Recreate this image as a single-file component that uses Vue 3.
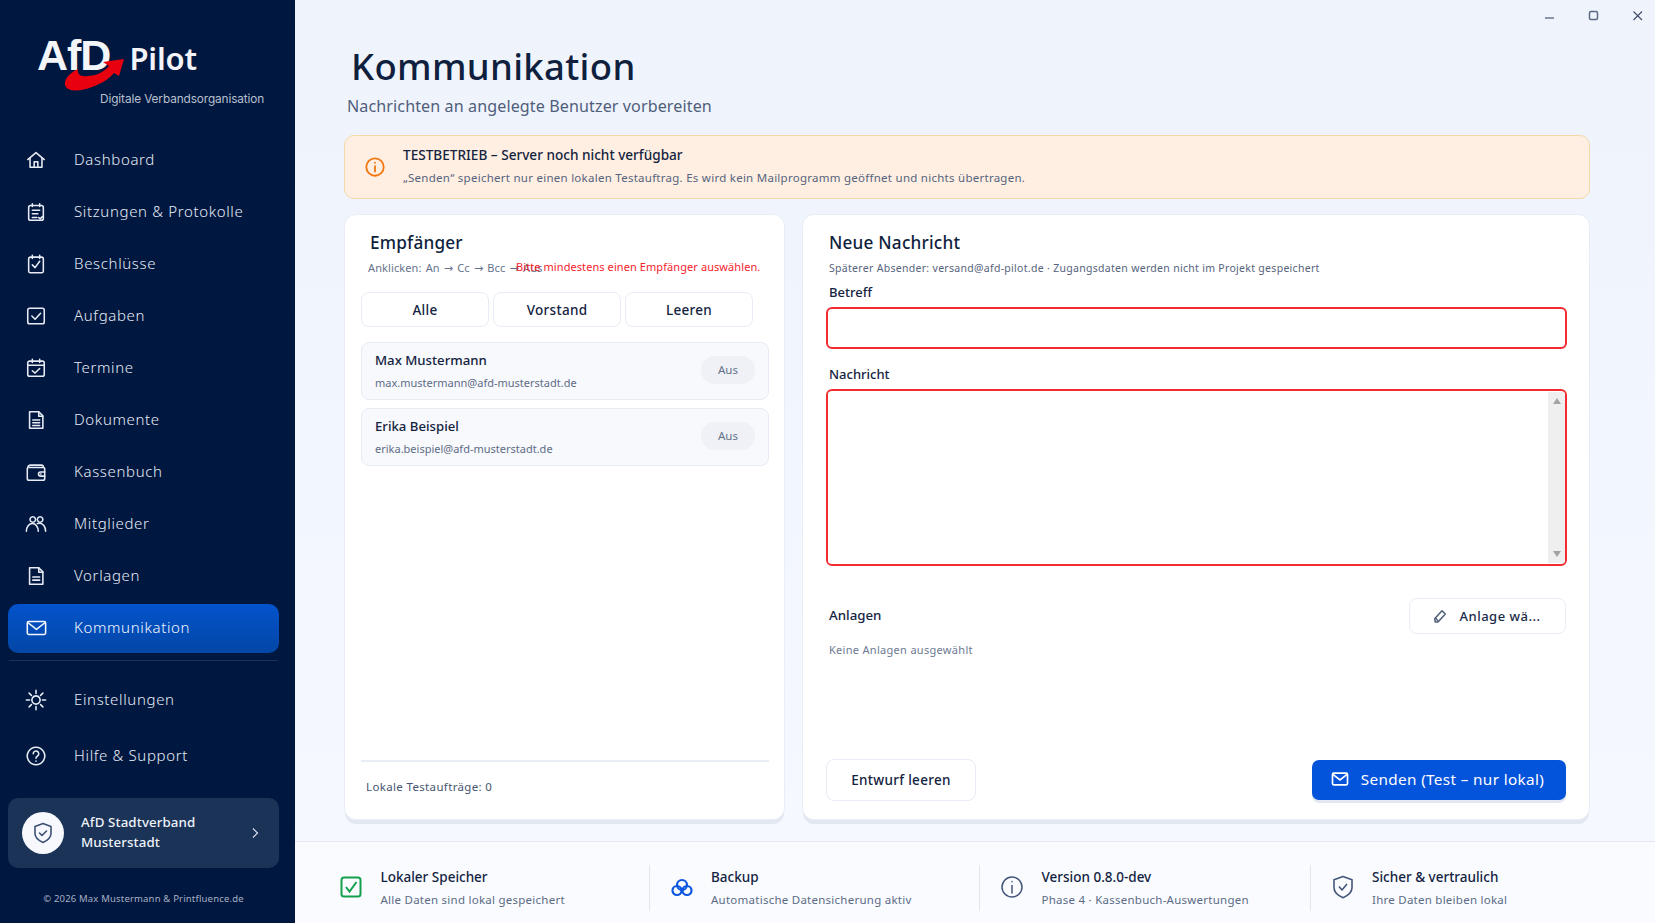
<script setup>
const nav = [
  { label: 'Dashboard', d: ['M3 11.5 12 4l9 7.5', 'M5.5 10v10h13V10', 'M10 20v-6h4v6'] },
  { label: 'Sitzungen & Protokolle', d: ['M8 3v3M16 3v3', 'M6 5h12a2 2 0 0 1 2 2v12a2 2 0 0 1-2 2H6a2 2 0 0 1-2-2V7a2 2 0 0 1 2-2z', 'M8 10h8M8 14h6M8 18h5', 'M15 18l1.5 1.5L19 17'] },
  { label: 'Beschlüsse', d: ['M8 2.5V6M16 2.5V6', 'M6 4.5h12a2 2 0 0 1 2 2V20a1.5 1.5 0 0 1-1.5 1.5h-13A1.5 1.5 0 0 1 4 20V6.500a2 2 0 0 1 2-2z', 'M8 13l3 3 5-7'] },
  { label: 'Aufgaben', d: ['M5 3.500h14A2 2 0 0 1 21 5.500v13a2 2 0 0 1-2 2H5a2 2 0 0 1-2-2v-13a2 2 0 0 1 2-2z', 'M7.500 12l3.500 3.500 6-6.500'] },
  { label: 'Termine', d: ['M8 2.500V6M16 2.500V6', 'M5 4.500h14a2 2 0 0 1 2 2V19a2 2 0 0 1-2 2H5a2 2 0 0 1-2-2V6.500a2 2 0 0 1 2-2z', 'M3 9h18', 'M8 15l3 2.500 5-5'] },
  { label: 'Dokumente', d: ['M5 3h10l4.500 4.500V21H5z', 'M15 3v5h4.500', 'M8.500 12h7.500M8.500 15h7.500M8.500 18h7.500'] },
  { label: 'Kassenbuch', d: ['M5 7h15a1.500 1.500 0 0 1 1.500 1.500v10.500a2 2 0 0 1-2 2h-15a2 2 0 0 1-2-2V8', 'M3 8a3.500 3.500 0 0 1 3.500-3.500H18a2 2 0 0 1 2 2V7', 'M21.500 12h-4.500a2 2 0 0 0 0 4.500h4.500', 'M17 14.200h.5'] },
  { label: 'Mitglieder', d: ['M8.500 4a3 3 0 1 0 .01 0z', 'M16.500 4a3 3 0 1 0 .01 0z', 'M1.500 20c0-5 3-8.500 6.500-8.500 3.500 0 6.500 3.500 6.500 8.500', 'M13.500 11.500c.8-.2 1.800-.3 2.500-.3 3.500 0 6.500 3.800 6.500 8.800'] },
  { label: 'Vorlagen', d: ['M5 3h10l4.500 4.500V21H5z', 'M15 3v5h4.500', 'M8.500 13h7.500M8.500 16.500h7.500'] },
  { label: 'Kommunikation', active: true, d: ['M4 5h17a1.500 1.500 0 0 1 1.500 1.500v11A1.500 1.500 0 0 1 21 19H4a1.500 1.500 0 0 1-1.500-1.500v-11A1.500 1.500 0 0 1 4 5z', 'M3 6l9.500 7.500L22 6'] }
]
const lower = [
  { label: 'Einstellungen', d: ['M12 7.500a4.500 4.500 0 1 0 .01 0z', 'M12 1.500v3.500M12 19v3.500M1.500 12H5M19 12h3.500M4.500 4.500 7 7M17 17l2.500 2.500M19.500 4.500 17 7M7 17l-2.500 2.500'] },
  { label: 'Hilfe & Support', d: ['M12 2.500a9.500 9.500 0 1 0 .01 0z', 'M9 9.500a3 3 0 1 1 4.800 2.400c-1.100.8-1.800 1.400-1.800 2.600', 'M12 17.500v.3'] }
]
const recipients = [
  { name: 'Max Mustermann', mail: 'max.mustermann@afd-musterstadt.de' },
  { name: 'Erika Beispiel', mail: 'erika.beispiel@afd-musterstadt.de' }
]
</script>

<template>
  <div class="app">
    <aside class="side">
      <div class="logo">
        <div class="logo-row">
          <span class="afd">AfD</span>
          <span class="pilot">Pilot</span>
        </div>
        <div class="tag">Digitale Verbandsorganisation</div>
        <svg class="swoosh" viewBox="60 50 70 45" width="70" height="45">
          <path fill="#e8000f" d="M78 69C70 73 64 79 65 85c2 7 15 7 27 2 11-4 18-9 22-14l5 3 5-17-21 3 6 4c-5 6-13 10-21 10-8 1-11-2-10-7z" />
        </svg>
      </div>
      <nav class="nav">
        <a v-for="n in nav" :key="n.label" class="item" :class="{ active: n.active }">
          <svg class="ico" viewBox="0 0 24 24"><path v-for="p in n.d" :key="p" :d="p" /></svg>
          <span>{{ n.label }}</span>
        </a>
      </nav>
      <div class="sep"></div>
      <nav class="nav lower">
        <a v-for="n in lower" :key="n.label" class="item">
          <svg class="ico" viewBox="0 0 24 24"><path v-for="p in n.d" :key="p" :d="p" /></svg>
          <span>{{ n.label }}</span>
        </a>
      </nav>
      <div class="org">
        <div class="org-badge">
          <svg viewBox="0 0 24 24" width="24" height="24" fill="none" stroke="#3c5174" stroke-width="1.600" stroke-linejoin="round" stroke-linecap="round">
            <path d="M12 2.500 20 5.500v7c0 4-3.200 6.800-8 9-4.800-2.200-8-5-8-9v-7z" />
            <path d="M8.500 12l2.500 2.500 4.500-4.500" />
          </svg>
        </div>
        <div class="org-name">AfD Stadtverband<br />Musterstadt</div>
        <svg class="org-arrow" viewBox="0 0 10 12" width="10" height="12" fill="none" stroke="#dbe3f0" stroke-width="1.200"><path d="M3 1.500 7.500 6 3 10.500" /></svg>
      </div>
      <div class="copy">© 2026 Max Mustermann &amp; Printfluence.de</div>
    </aside>

    <main class="main">
      <div class="win">
        <svg viewBox="0 0 12 12" width="12" height="12"><path d="M1 8h9" stroke="#6a7690" stroke-width="1.500" /></svg>
        <svg viewBox="0 0 12 12" width="12" height="12"><rect x="1.500" y="1.500" width="8" height="8" rx="1.500" fill="none" stroke="#5d6a85" stroke-width="1.500" /></svg>
        <svg viewBox="0 0 12 12" width="12" height="12"><path d="M1.500 1.500l8.500 8.500M10 1.500 1.500 10" stroke="#3f4b66" stroke-width="1.100" /></svg>
      </div>

      <div class="content">
        <h1>Kommunikation</h1>
        <p class="subtitle">Nachrichten an angelegte Benutzer vorbereiten</p>

        <div class="alert">
          <svg viewBox="0 0 24 24" width="22" height="22" fill="none" stroke="#f5770f" stroke-width="2" stroke-linecap="round">
            <circle cx="12" cy="12" r="9.500" />
            <path d="M12 11v6M12 7.200v.2" />
          </svg>
          <div class="alert-b">
            <div class="alert-t">TESTBETRIEB – Server noch nicht verfügbar</div>
            <div class="alert-d">„Senden“ speichert nur einen lokalen Testauftrag. Es wird kein Mailprogramm geöffnet und nichts übertragen.</div>
          </div>
        </div>

        <div class="cards">
          <section class="card left">
            <h2>Empfänger</h2>
            <div class="hintrow">
              <span class="hint">Anklicken: An → Cc → Bcc → Aus</span>
              <span class="err">Bitte mindestens einen Empfänger auswählen.</span>
            </div>
            <div class="btns">
              <button class="btn">Alle</button>
              <button class="btn">Vorstand</button>
              <button class="btn">Leeren</button>
            </div>
            <div v-for="r in recipients" :key="r.mail" class="rec">
              <div class="rec-b">
                <div class="rec-n">{{ r.name }}</div>
                <div class="rec-m">{{ r.mail }}</div>
              </div>
              <span class="pill">Aus</span>
            </div>
            <div class="local">Lokale Testaufträge: 0</div>
          </section>

          <section class="card right">
            <h2>Neue Nachricht</h2>
            <div class="sender">Späterer Absender: versand@afd-pilot.de · Zugangsdaten werden nicht im Projekt gespeichert</div>
            <label class="lab lab1">Betreff</label>
            <input class="inp" type="text" />
            <label class="lab lab2">Nachricht</label>
            <div class="ta">
              <textarea></textarea>
              <div class="sb"><i class="up"></i><i class="down"></i></div>
            </div>
            <div class="att">
              <span class="att-l">Anlagen</span>
              <button class="att-b">
                <svg viewBox="0 0 24 24" width="16" height="16" fill="none" stroke="#4d5c78" stroke-width="2.200" stroke-linejoin="round"><path d="M4 16 15 4l5 5-11 12H5z" /><path d="M5 15l4 4" /></svg>
                Anlage wä...
              </button>
            </div>
            <div class="none">Keine Anlagen ausgewählt</div>
            <div class="actions">
              <button class="draft">Entwurf leeren</button>
              <button class="send">
                <svg viewBox="0 0 24 24" width="20" height="20" fill="none" stroke="#fff" stroke-width="2"><rect x="3" y="5" width="18" height="14" rx="1.500" /><path d="M3.500 6.500 12 13l8.500-6.500" /></svg>
                Senden (Test – nur lokal)
              </button>
            </div>
          </section>
        </div>
      </div>

      <footer class="foot">
        <div class="fi">
          <svg viewBox="0 0 24 24" width="24" height="24" fill="none" stroke="#14a04c" stroke-width="2"><rect x="2.500" y="2.500" width="19" height="19" rx="2.500" /><path d="M7 12l3.500 4.500L17.500 7" /></svg>
          <div class="fb"><div class="ft">Lokaler Speicher</div><div class="fd">Alle Daten sind lokal gespeichert</div></div>
        </div>
        <div class="fi">
          <svg viewBox="0 0 24 24" width="24" height="24" fill="none" stroke="#0b57e0" stroke-width="2.200"><circle cx="12" cy="10" r="5" /><circle cx="7" cy="15.500" r="4.500" /><circle cx="17" cy="15.500" r="4.500" /></svg>
          <div class="fb"><div class="ft">Backup</div><div class="fd">Automatische Datensicherung aktiv</div></div>
        </div>
        <div class="fi">
          <svg viewBox="0 0 24 24" width="24" height="24" fill="none" stroke="#44577a" stroke-width="1.500" stroke-linecap="round"><circle cx="12" cy="12" r="10" /><path d="M12 10.500V18M12 6.500v.3" /></svg>
          <div class="fb"><div class="ft">Version 0.8.0-dev</div><div class="fd">Phase 4 · Kassenbuch-Auswertungen</div></div>
        </div>
        <div class="fi">
          <svg viewBox="0 0 24 24" width="24" height="24" fill="none" stroke="#44577a" stroke-width="1.600" stroke-linejoin="round"><path d="M12 1.500 21 4.800v8c0 4-3.500 7.500-9 10-5.500-2.500-9-6-9-10v-8z" /><path d="M8 11.500l3 3.500 5-6" /></svg>
          <div class="fb"><div class="ft">Sicher &amp; vertraulich</div><div class="fd">Ihre Daten bleiben lokal</div></div>
        </div>
      </footer>
    </main>
  </div>
</template>

<style scoped>
.app { display: flex; height: 923px; overflow: hidden; font-family: "Noto Sans", sans-serif; color: #0f1f3d; }
.side { width: 295px; flex: none; background: #00173f; display: flex; flex-direction: column; padding: 0 16px 0 8px; box-sizing: border-box; }
.logo { position: relative; height: 135.500px; flex: none; padding: 31px 0 0 29px; box-sizing: border-box; }
.logo-row { display: flex; align-items: baseline; }
.afd { font: 700 43px/48px "Liberation Sans", sans-serif; color: #f4f5f8; letter-spacing: -1px; width: 92.500px; }
.pilot { font: 600 31px/48px "Noto Sans", sans-serif; color: #f2f4f8; letter-spacing: -.2px; }
.tag { font: 400 11.800px/16px Inter, sans-serif; color: #b8c0cf; margin: 9px 0 0 63px; letter-spacing: -.1px; }
.swoosh { position: absolute; left: 52px; top: 50px; }
.nav { display: flex; flex-direction: column; gap: 3px; }
.item { display: flex; align-items: center; height: 49px; padding-left: 17px; border-radius: 10px; color: #e6ebf5; font-size: 15px; font-weight: 300; letter-spacing: .65px; }
.item span { margin-top: -2px; }
.item.active { background: linear-gradient(180deg, #0353cc, #0347a6); color: #f4f7fd; }
.ico { width: 22px; height: 22px; margin-right: 27px; fill: none; stroke: currentColor; stroke-width: 1.700; stroke-linejoin: round; stroke-linecap: round; flex: none; }
.sep { height: 1px; background: #1b3156; margin: 7.500px 1px 14px 1px; flex: none; }
.lower { gap: 7px; }
.org { margin-top: 18px; height: 70px; flex: none; border-radius: 10px; background: #1b3357; display: flex; align-items: center; padding-left: 14px; position: relative; }
.org-badge { width: 42px; height: 42px; border-radius: 50%; background: #f6f8fd; display: flex; align-items: center; justify-content: center; flex: none; }
.org-name { margin: -2px 0 0 17px; font-size: 13.300px; line-height: 20px; font-weight: 500; color: #eef2f9; flex: 1; letter-spacing: .1px; }
.org-arrow { margin-right: 19px; }
.copy { margin-top: 24px; text-align: center; font-size: 9.500px; color: #a6b0c4; line-height: 14px; letter-spacing: .18px; }
.main { flex: 1; min-width: 0; display: flex; flex-direction: column; background: linear-gradient(180deg, #eef3fc, #f6f9ff); position: relative; }
.win { position: absolute; top: 10px; right: 11px; display: flex; gap: 32px; }
.content { flex: 1; padding: 43px 65px 0 49px; min-height: 0; }
h1 { margin: 0; font-size: 36.500px; line-height: 46px; font-weight: 500; color: #0f1f3d; letter-spacing: .32px; padding-left: 7px; }
.subtitle { margin: 5px 0 0 3px; font-size: 16.100px; line-height: 24px; color: #4f5e7b; letter-spacing: .1px; }
.alert { margin-top: 17px; height: 64px; box-sizing: border-box; border: 1.500px solid #f3d9a8; border-radius: 10px; background: #ffefe2; display: flex; align-items: center; padding-left: 19px; gap: 17px; }
.alert-b { margin-top: -2px; }
.alert-t { font-size: 13.600px; line-height: 20px; font-weight: 500; color: #14233f; }
.alert-d { font-size: 11.500px; line-height: 18px; margin-top: 4px; color: #56637c; letter-spacing: .26px; }
.cards { display: flex; gap: 17px; margin-top: 15px; height: 606px; }
.card { background: #fff; border: 1px solid #e9eef6; border-radius: 12px; box-shadow: 0 5px 0 -1px #e3e8f0; box-sizing: border-box; display: flex; flex-direction: column; }
.left { width: 441px; padding: 0 15px 0 16px; }
.right { width: 788px; padding: 0 22px 0 23px; }
h2 { margin: 15px 0 0 9px; font-size: 17.200px; line-height: 26px; font-weight: 500; color: #0f1f3d; letter-spacing: .2px; }
.right h2 { margin-left: 3px; }
.hintrow { position: relative; height: 18px; margin-top: 3px; }
.hint { position: absolute; left: 7px; top: 0; white-space: nowrap; font-family: "Noto Sans", "DejaVu Sans", sans-serif; font-size: 11px; line-height: 18px; color: #66738c; letter-spacing: .1px; word-spacing: 1.200px; }
.err { position: absolute; left: 155px; top: -1px; white-space: nowrap; font-size: 11px; line-height: 18px; color: #f5222d; letter-spacing: .08px; }
.btns { display: flex; gap: 4px; margin-top: 15px; }
.btn { width: 128px; height: 35px; box-sizing: border-box; background: #fff; border: 1px solid #e8edf5; border-radius: 8px; font: 500 13.500px "Noto Sans", sans-serif; color: #14233f; letter-spacing: .3px; padding: 0; }
.rec { height: 58px; box-sizing: border-box; background: #f7f9fd; border: 1px solid #e7ecf4; border-radius: 8px; display: flex; justify-content: space-between; align-items: center; padding: 0 13px; margin-top: 15px; }
.rec + .rec { margin-top: 8px; }
.rec-b { padding-bottom: 2px; }
.rec-n { font-size: 13.200px; line-height: 20px; font-weight: 500; color: #14233f; }
.rec-m { font-size: 11px; line-height: 16px; color: #5f6c85; margin-top: 5px; }
.pill { width: 54px; height: 28px; border-radius: 14px; background: #eff1f6; font-size: 11.500px; line-height: 28px; text-align: center; color: #64718a; margin-bottom: 2px; }
.local { margin-top: auto; border-top: 2px solid #e9edf4; height: 59px; box-sizing: border-box; padding: 15px 0 0 5px; font-size: 11.500px; line-height: 20px; color: #47556f; letter-spacing: .35px; }
.sender { margin: 3px 0 0 3px; font-size: 10.500px; line-height: 18px; color: #56637c; letter-spacing: .3px; }
.lab { display: block; margin-left: 3px; font-size: 13px; line-height: 18px; font-weight: 500; color: #14233f; }
.lab1 { margin-top: 6px; }
.lab2 { margin-top: 16px; }
.inp { display: block; margin-top: 6px; width: 100%; height: 42px; box-sizing: border-box; border: 2px solid #f22c30; border-radius: 6px; outline: none; background: #fff; }
.ta { margin-top: 6px; height: 177px; box-sizing: border-box; border: 2px solid #f22c30; border-radius: 6px; display: flex; overflow: hidden; padding: 1px 0; }
.ta textarea { flex: 1; border: 0; outline: none; resize: none; background: #fff; }
.sb { width: 17px; background: #efefef; display: flex; flex-direction: column; justify-content: space-between; align-items: center; padding: 6px 0; box-sizing: border-box; }
.sb i { width: 0; height: 0; border-left: 4.500px solid transparent; border-right: 4.500px solid transparent; }
.up { border-bottom: 6px solid #a3a3a3; }
.down { border-top: 6px solid #a3a3a3; }
.att { display: flex; justify-content: space-between; align-items: center; margin-top: 32px; height: 36px; }
.att-l { margin: -2px 0 0 3px; font-size: 13.300px; font-weight: 500; color: #14233f; }
.att-b { width: 157px; height: 36px; margin-right: 1px; box-sizing: border-box; background: #fff; border: 1px solid #e8edf5; border-radius: 8px; display: flex; align-items: center; justify-content: center; gap: 11px; font: 500 13px "Noto Sans", sans-serif; color: #1a2a4a; letter-spacing: .5px; padding: 0 2px 0 0; }
.none { margin: 7px 0 0 3px; font-size: 11px; line-height: 18px; color: #6d7a92; letter-spacing: .3px; }
.actions { margin-top: auto; display: flex; justify-content: space-between; align-items: flex-start; height: 59px; }
.draft { width: 150px; height: 42px; box-sizing: border-box; background: #fff; border: 1px solid #e8edf5; border-radius: 8px; font: 500 13.500px "Noto Sans", sans-serif; color: #14233f; letter-spacing: .3px; padding: 0; margin-top: -1px; }
.send { width: 254px; height: 40px; margin-right: 1px; border: 0; border-radius: 7px; background: #0353db; box-shadow: 0 3px 0 #e3e8f0; color: #fff; font: 400 15.300px "Noto Sans", sans-serif; letter-spacing: .35px; display: flex; align-items: center; justify-content: center; gap: 11px; padding: 0 4px 2px 0; }
.foot { height: 82px; flex: none; box-sizing: border-box; border-top: 1.500px solid #e6e9f0; background: #f9fbff; display: flex; padding: 23px 0 0 24px; }
.fi { width: 330.500px; height: 46px; padding-left: 20px; box-sizing: border-box; display: flex; gap: 17.500px; align-items: center; border-right: 1px solid #e2e6ee; }
.fi svg { flex: none; margin-top: -2px; }
.fi:last-child { border-right: 0; }
.fb { margin-top: -2px; }
.ft { font-size: 13.500px; line-height: 20px; font-weight: 500; color: #14233f; }
.fd { font-size: 11.500px; line-height: 16px; margin-top: 5px; color: #5c6b85; letter-spacing: .25px; }
</style>

<style>
html, body { margin: 0; background: #eef3fc; overflow: hidden; }
</style>
